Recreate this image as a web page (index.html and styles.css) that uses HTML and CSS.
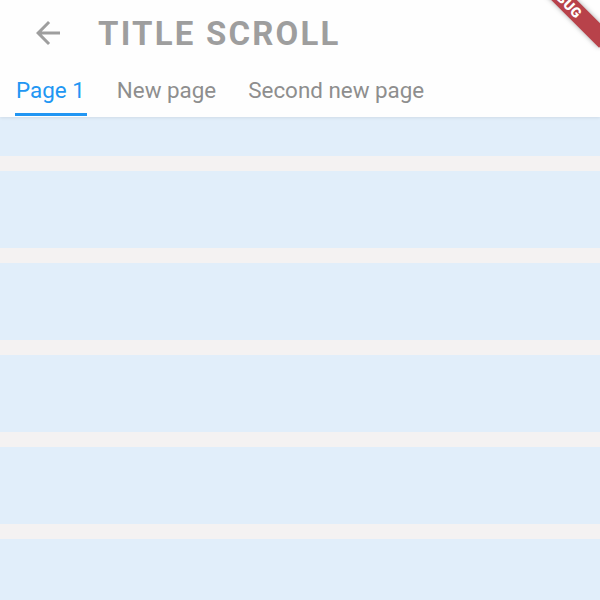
FILE: index.html
```html
<!DOCTYPE html>
<html>
<head>
<meta charset="utf-8">
<link rel="stylesheet" href="styles.css">
</head>
<body>
<div class="screen">
  <header class="appbar">
    <div class="title-row">
      <svg class="back" viewBox="0 0 24 24" width="36" height="36"><path d="M20 11H7.83l5.59-5.59L12 4l-8 8 8 8 1.41-1.41L7.83 13H20v-2z" fill="#9e9e9e"/></svg>
      <h1 class="title">TITLE SCROLL</h1>
    </div>
    <nav class="tabs">
      <div class="tab active"><span>Page 1</span></div>
      <div class="tab"><span>New page</span></div>
      <div class="tab"><span>Second new page</span></div>
    </nav>
  </header>
  <main class="list">
    <div class="items">
      <div class="item"></div>
      <div class="item"></div>
      <div class="item"></div>
      <div class="item"></div>
      <div class="item"></div>
      <div class="item"></div>
      <div class="item"></div>
    </div>
  </main>
  <div class="banner">DEBUG</div>
</div>
</body>
</html>
```

FILE: styles.css
```css
html, body {
  margin: 0;
  padding: 0;
  background: #f4f2f2;
}
.screen {
  position: relative;
  width: 600px;
  height: 600px;
  overflow: hidden;
  font-family: Roboto, "Liberation Sans", sans-serif;
  background: #f4f2f2;
  display: flex;
  flex-direction: column;
}
.appbar {
  position: relative;
  z-index: 2;
  background: #fefefe;
  height: 117px;
  flex: none;
  display: flex;
  flex-direction: column;
  box-shadow: 0 1px 3px rgba(0,0,0,0.08);
}
.title-row {
  height: 66px;
  display: flex;
  align-items: center;
  padding-left: 30px;
}
.back {
  display: block;
  flex: none;
}
.title {
  margin: 0 0 0 32px;
  font-size: 33px;
  line-height: 1;
  font-weight: 700;
  letter-spacing: 2.2px;
  color: #9e9e9e;
}
.tabs {
  height: 51px;
  display: flex;
  padding-left: 15px;
}
.tab {
  display: flex;
  flex-direction: column;
  justify-content: flex-end;
  font-size: 22.4px;
  color: #8e8e8e;
  padding-bottom: 4px;
}
.tab span {
  display: block;
  line-height: 1;
  padding: 0 1px 12px;
}
.tab.active {
  color: #2196f3;
  padding-bottom: 1px;
  margin-right: 29px;
}
.tab.active span {
  border-bottom: 3px solid #2196f3;
  padding-right: 2px;
}
.tab + .tab + .tab {
  margin-left: 30px;
}
.list {
  flex: 1;
  overflow: hidden;
}
.items {
  display: flex;
  flex-direction: column;
  gap: 15px;
  margin-top: -38px;
}
.item {
  height: 77px;
  background: #e1eefa;
  flex: none;
}
.banner {
  position: absolute;
  left: 503px;
  top: -10px;
  width: 120px;
  height: 18px;
  line-height: 18px;
  text-align: center;
  transform: rotate(45deg);
  background: #b8424a;
  color: #fff;
  font-size: 14px;
  font-weight: 900;
  letter-spacing: 0.5px;
  box-shadow: 0 0 5px rgba(0,0,0,0.35);
  z-index: 3;
}
```
